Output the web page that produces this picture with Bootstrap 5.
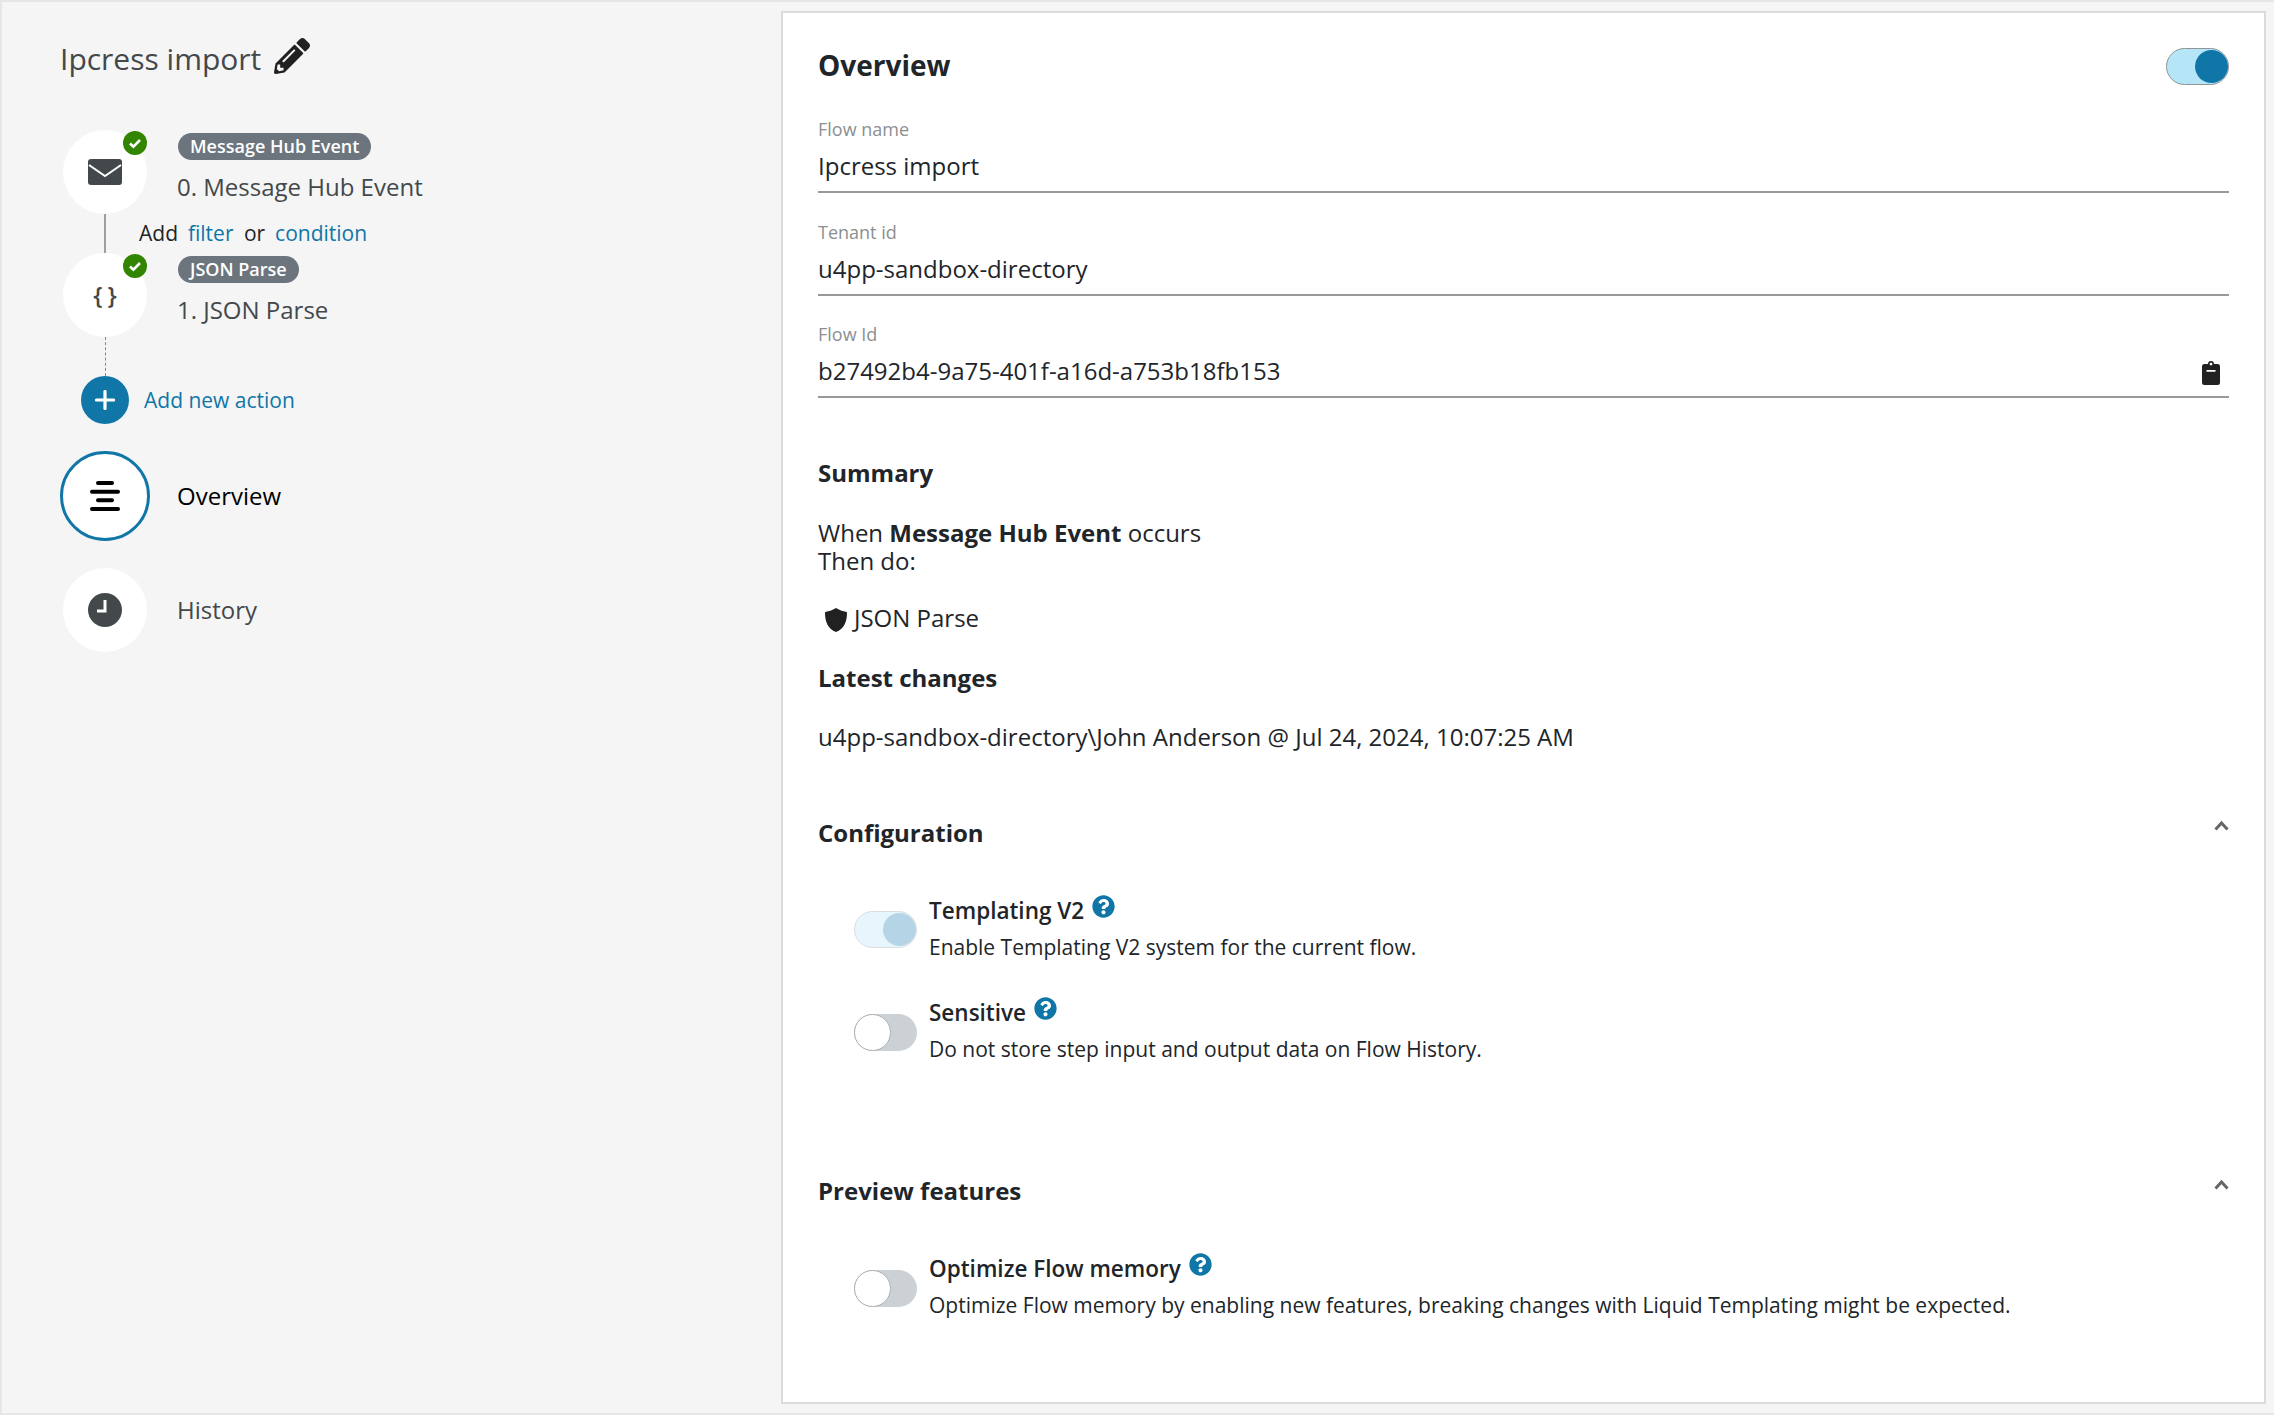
<!doctype html>
<html lang="en">
<head>
  <meta charset="utf-8">
  <meta name="viewport" content="width=device-width, initial-scale=1">
  <title>Ipcress import</title>
  <link href="https://cdn.jsdelivr.net/npm/bootstrap@5.3.0/dist/css/bootstrap.min.css" rel="stylesheet">
  <script src="https://cdn.jsdelivr.net/npm/bootstrap@5.3.0/dist/js/bootstrap.bundle.min.js"></script>
  <style>
    html, body { height: 100%; }
    body {
      font-family: "Open Sans", "Liberation Sans", sans-serif;
      font-size: 24px;
      color: #212529;
      background: #f5f5f5;
    }
    a { color: #1076a8; text-decoration: none; }

    .app-shell { height: 1415px; border-top: 2px solid #e6e6e6; border-left: 2px solid #e6e6e6; border-bottom: 2px solid #e6e6e6; }

    .side-pane { width: 779px; flex: none; padding: 0 0 0 58px; color: #43484b; }
    .flow-title { height: 128px; padding-top: 35px; margin: 0; font-size: 30px; line-height: 44px; font-weight: 400; }
    .flow-title svg { width: 36px; height: 36px; margin-left: 5px; vertical-align: -4px; color: #212121; }

    .step-row { height: 84px; }
    .step-icon { width: 84px; height: 84px; margin-left: 3px; flex: none; border-radius: 50%; background: #fff; color: #43484b; }
    .step-check { position: absolute; top: 1px; right: 0; width: 24px; height: 24px; }
    .step-text { margin-left: 30px; }
    .step-tag { font-size: 18px; line-height: 27px; font-weight: 600; background: #6c757d; color: #fff; border-radius: 14px; padding: 0 12px; margin: 3px 0 0 1px; }
    .step-name { font-size: 24px; line-height: 32px; margin-top: 11px; }
    .brace-icon { font-size: 24px; font-weight: 600; letter-spacing: 5px; margin-left: 5px; line-height: 1; }

    .rail-solid { height: 39px; margin-left: 44px; border-left: 2px solid #9aa0a3; padding-left: 33px; font-size: 21px; line-height: 38px; color: #212529; }
    .rail-solid a { margin: 0 5px 0 4.5px; }
    .rail-dash { height: 39px; margin-left: 45px; border-left: 1px dashed #888; }

    .add-dot { width: 48px; height: 48px; margin-left: 21px; flex: none; border-radius: 50%; background: #1076a8; }
    .add-row { margin-bottom: 27px; }
    .add-link { margin: 2px 0 0 15px; font-size: 21px; }

    .nav-dot { width: 90px; height: 90px; flex: none; border-radius: 50%; background: #fff; border: 3px solid #1076a8; }
    .nav-dot-plain { width: 84px; height: 84px; margin-left: 3px; flex: none; border-radius: 50%; background: #fff; }
    .nav-label { margin-left: 27px; font-size: 24px; }
    .nav-label-plain { margin-left: 30px; font-size: 24px; }
    .nav-spacer { height: 27px; }

    .main-pane { flex: 1; margin: 9px 8px 9px 0; background: #fff; border: 2px solid #d9dbdd; padding: 0 35px; }
    .pane-head { height: 103px; padding-top: 3px; }
    .pane-head h1 { font-size: 28px; font-weight: 700; margin: 0; }

    .flow-toggle { position: relative; display: block; width: 63px; height: 37px; flex: none; border-radius: 19px; background: #ccd1d5; }
    .flow-toggle::after { content: ""; position: absolute; top: 0; left: 0; width: 37px; height: 37px; border-radius: 50%; background: #fff; border: 1.5px solid #aab0b4; }
    .flow-toggle.is-on { background: #b5e6f8; border: 1.5px solid #8f9599; }
    .flow-toggle.is-on::after { left: auto; right: 0; top: 1px; width: 33px; height: 33px; background: #1076a8; border: 0; }
    .flow-toggle.is-faded { background: #e7f6fc; border: 1.5px solid #dadddf; }
    .flow-toggle.is-faded::after { left: auto; right: 0; top: 1px; width: 33px; height: 33px; background: #b5d5e6; border: 0; }

    .field-box { height: 102.5px; }
    .field-label { font-size: 18px; line-height: 26px; color: #8c8f91; }
    .field-value { height: 51px; border-bottom: 2px solid #999; font-size: 24px; line-height: 42px; padding-top: 3px; }
    .field-value svg { width: 18px; height: 24px; margin: 11px 9px 0 0; color: #212121; }

    .sect-title { font-size: 24px; font-weight: 700; margin: 0; line-height: 32px; }
    .plain-line { line-height: 28px; }
    .shield-icon { width: 22px; height: 24px; margin: 0 7px 0 7px; vertical-align: -5px; }
    .gap-summary { margin-top: 33px; }
    .gap-text { margin-top: 30.5px; }
    .gap-line { margin-top: 28.5px; }
    .gap-config { margin-top: 66px; }
    .gap-first-opt { margin-top: 46px; }
    .gap-opt { margin-top: 35.5px; }
    .gap-preview { margin-top: 111px; }

    .opt-row { padding-left: 36px; }
    .opt-row .flow-toggle { margin-top: 3px; }
    .opt-text { margin-left: 12px; }
    .opt-name { font-size: 22.5px; font-weight: 600; line-height: 32px; height: 32px; }
    .opt-name svg { width: 23px; height: 23px; margin-left: 2px; vertical-align: 1px; }
    .opt-desc { font-size: 21px; line-height: 30px; margin-top: 5px; }
    .chev { width: 15px; height: 11px; margin-top: -14px; }
  </style>
</head>
<body>
  <div class="app-shell d-flex">
    <aside class="side-pane">
      <h2 class="flow-title">Ipcress import
        <svg viewBox="0 0 512 512" fill="currentColor"><path d="M497.9 142.1l-46.1 46.1c-4.7 4.7-12.3 4.7-17 0l-111-111c-4.7-4.7-4.7-12.3 0-17l46.1-46.1c18.7-18.7 49.1-18.7 67.9 0l60.1 60.1c18.8 18.7 18.8 49.1 0 67.9zM284.2 99.8L21.6 362.4.4 483.9c-2.9 16.4 11.4 30.6 27.8 27.8l121.5-21.3 262.6-262.6c4.7-4.7 4.7-12.3 0-17l-111-111c-4.8-4.7-12.4-4.7-17.1 0zM124.1 339.9c-5.5-5.5-5.5-14.3 0-19.8l154-154c5.5-5.5 14.3-5.5 19.8 0s5.5 14.3 0 19.8l-154 154c-5.5 5.5-14.3 5.5-19.8 0zM88 424h48v36.3l-64.5 11.3-31.1-31.1L51.7 376H88v48z"/></svg>
      </h2>

      <div class="step-row d-flex">
        <div class="step-icon position-relative d-flex align-items-center justify-content-center">
          <svg width="34" height="26" viewBox="0 0 34 26"><rect width="34" height="26" rx="3" fill="#43484b"/><path d="M1 6l16 11L33 6" fill="none" stroke="#fff" stroke-width="2"/></svg>
          <svg class="step-check" viewBox="0 0 24 24"><circle cx="12" cy="12" r="12" fill="#328500"/><path d="M7 12.5l3.4 3.2L17 9" fill="none" stroke="#fff" stroke-width="2.6"/></svg>
        </div>
        <div class="step-text d-flex flex-column align-items-start">
          <span class="step-tag">Message Hub Event</span>
          <span class="step-name">0. Message Hub Event</span>
        </div>
      </div>
      <div class="rail-solid">Add <a href="#">filter</a> or <a href="#">condition</a></div>
      <div class="step-row d-flex">
        <div class="step-icon position-relative d-flex align-items-center justify-content-center">
          <span class="brace-icon">{}</span>
          <svg class="step-check" viewBox="0 0 24 24"><circle cx="12" cy="12" r="12" fill="#328500"/><path d="M7 12.5l3.4 3.2L17 9" fill="none" stroke="#fff" stroke-width="2.6"/></svg>
        </div>
        <div class="step-text d-flex flex-column align-items-start">
          <span class="step-tag">JSON Parse</span>
          <span class="step-name">1. JSON Parse</span>
        </div>
      </div>
      <div class="rail-dash"></div>

      <div class="add-row d-flex align-items-center">
        <div class="add-dot d-flex align-items-center justify-content-center">
          <svg width="20" height="20" viewBox="0 0 20 20"><path d="M10 1.5v17M1.5 10h17" stroke="#fff" stroke-width="3.2" stroke-linecap="round"/></svg>
        </div>
        <a class="add-link" href="#">Add new action</a>
      </div>

      <div class="d-flex align-items-center">
        <div class="nav-dot d-flex align-items-center justify-content-center">
          <svg width="30" height="32" viewBox="0 0 30 32"><path d="M8 3h14M2 11.700h26M8 20.300h14M2 29h26" stroke="#000" stroke-width="4" stroke-linecap="round"/></svg>
        </div>
        <span class="nav-label text-black">Overview</span>
      </div>
      <div class="nav-spacer"></div>
      <div class="d-flex align-items-center">
        <div class="nav-dot-plain d-flex align-items-center justify-content-center">
          <svg width="34" height="34" viewBox="0 0 34 34"><circle cx="17" cy="17" r="17" fill="#43484b"/><path d="M17 7v11H9" fill="none" stroke="#fff" stroke-width="3"/></svg>
        </div>
        <span class="nav-label-plain">History</span>
      </div>
    </aside>

    <main class="main-pane">
      <div class="pane-head d-flex justify-content-between align-items-center">
        <h1>Overview</h1>
        <span class="flow-toggle is-on"></span>
      </div>

      <div class="field-box">
        <div class="field-label">Flow name</div>
        <div class="field-value">Ipcress import</div>
      </div>
      <div class="field-box">
        <div class="field-label">Tenant id</div>
        <div class="field-value">u4pp-sandbox-directory</div>
      </div>
      <div class="field-box">
        <div class="field-label">Flow Id</div>
        <div class="field-value d-flex justify-content-between align-items-start">
          <span>b27492b4-9a75-401f-a16d-a753b18fb153</span>
          <svg viewBox="0 0 18 24" fill="currentColor"><path d="M6 3a3 3 0 0 1 6 0h3.500a2.500 2.500 0 0 1 2.500 2.500v16a2.500 2.500 0 0 1-2.500 2.500h-13A2.500 2.500 0 0 1 0 21.500v-16A2.500 2.500 0 0 1 2.500 3H6zm3-1.300a1.400 1.400 0 1 0 0 2.800 1.400 1.400 0 0 0 0-2.800zM4.500 9v1.800h9V9h-9z" fill-rule="evenodd"/></svg>
        </div>
      </div>

      <h2 class="sect-title gap-summary">Summary</h2>
      <div class="plain-line gap-text">When <strong>Message Hub Event</strong> occurs<br>Then do:</div>
      <div class="plain-line gap-line"><svg class="shield-icon" viewBox="0 0 22 24"><path d="M11 0c3 2 7 3.300 10 3.800.700.100 1 .6 1 1.200 0 9-3 15.800-11 19C3 20.800 0 14 0 5c0-.6.300-1.100 1-1.200C4 3.300 8 2 11 0z" fill="#212121"/></svg>JSON Parse</div>
      <h2 class="sect-title gap-text">Latest changes</h2>
      <div class="plain-line gap-line">u4pp-sandbox-directory\John Anderson @ Jul 24, 2024, 10:07:25 AM</div>

      <div class="d-flex justify-content-between align-items-center gap-config">
        <h2 class="sect-title">Configuration</h2>
        <svg class="chev" viewBox="0 0 15 11"><path d="M1.500 9.500l6-6.500 6 6.500" fill="none" stroke="#666" stroke-width="3"/></svg>
      </div>

      <div class="opt-row d-flex align-items-center gap-first-opt">
        <span class="flow-toggle is-faded"></span>
        <div class="opt-text">
          <div class="opt-name">Templating V2 <svg viewBox="0 0 512 512" fill="#1076a8"><path d="M504 256c0 136.997-111.043 248-248 248S8 392.997 8 256C8 119.083 119.043 8 256 8s248 111.083 248 248zM262.655 90c-54.497 0-89.255 22.957-116.549 63.758-3.536 5.286-2.353 12.415 2.715 16.258l34.699 26.31c5.205 3.947 12.621 3.008 16.665-2.122 17.864-22.658 30.113-35.797 57.303-35.797 20.429 0 45.698 13.148 45.698 32.958 0 14.976-12.363 22.667-32.534 33.976C247.128 238.528 216 254.941 216 296v4c0 6.627 5.373 12 12 12h56c6.627 0 12-5.373 12-12v-1.333c0-28.462 83.186-29.647 83.186-106.667 0-58.002-60.165-102-116.531-102zM256 338c-25.365 0-46 20.635-46 46 0 25.364 20.635 46 46 46s46-20.636 46-46c0-25.365-20.635-46-46-46z"/></svg></div>
          <div class="opt-desc">Enable Templating V2 system for the current flow.</div>
        </div>
      </div>
      <div class="opt-row d-flex align-items-center gap-opt">
        <span class="flow-toggle"></span>
        <div class="opt-text">
          <div class="opt-name">Sensitive <svg viewBox="0 0 512 512" fill="#1076a8"><path d="M504 256c0 136.997-111.043 248-248 248S8 392.997 8 256C8 119.083 119.043 8 256 8s248 111.083 248 248zM262.655 90c-54.497 0-89.255 22.957-116.549 63.758-3.536 5.286-2.353 12.415 2.715 16.258l34.699 26.31c5.205 3.947 12.621 3.008 16.665-2.122 17.864-22.658 30.113-35.797 57.303-35.797 20.429 0 45.698 13.148 45.698 32.958 0 14.976-12.363 22.667-32.534 33.976C247.128 238.528 216 254.941 216 296v4c0 6.627 5.373 12 12 12h56c6.627 0 12-5.373 12-12v-1.333c0-28.462 83.186-29.647 83.186-106.667 0-58.002-60.165-102-116.531-102zM256 338c-25.365 0-46 20.635-46 46 0 25.364 20.635 46 46 46s46-20.636 46-46c0-25.365-20.635-46-46-46z"/></svg></div>
          <div class="opt-desc">Do not store step input and output data on Flow History.</div>
        </div>
      </div>

      <div class="d-flex justify-content-between align-items-center gap-preview">
        <h2 class="sect-title">Preview features</h2>
        <svg class="chev" viewBox="0 0 15 11"><path d="M1.500 9.500l6-6.500 6 6.500" fill="none" stroke="#666" stroke-width="3"/></svg>
      </div>

      <div class="opt-row d-flex align-items-center gap-first-opt">
        <span class="flow-toggle"></span>
        <div class="opt-text">
          <div class="opt-name">Optimize Flow memory <svg viewBox="0 0 512 512" fill="#1076a8"><path d="M504 256c0 136.997-111.043 248-248 248S8 392.997 8 256C8 119.083 119.043 8 256 8s248 111.083 248 248zM262.655 90c-54.497 0-89.255 22.957-116.549 63.758-3.536 5.286-2.353 12.415 2.715 16.258l34.699 26.31c5.205 3.947 12.621 3.008 16.665-2.122 17.864-22.658 30.113-35.797 57.303-35.797 20.429 0 45.698 13.148 45.698 32.958 0 14.976-12.363 22.667-32.534 33.976C247.128 238.528 216 254.941 216 296v4c0 6.627 5.373 12 12 12h56c6.627 0 12-5.373 12-12v-1.333c0-28.462 83.186-29.647 83.186-106.667 0-58.002-60.165-102-116.531-102zM256 338c-25.365 0-46 20.635-46 46 0 25.364 20.635 46 46 46s46-20.636 46-46c0-25.365-20.635-46-46-46z"/></svg></div>
          <div class="opt-desc">Optimize Flow memory by enabling new features, breaking changes with Liquid Templating might be expected.</div>
        </div>
      </div>
    </main>
  </div>
</body>
</html>
